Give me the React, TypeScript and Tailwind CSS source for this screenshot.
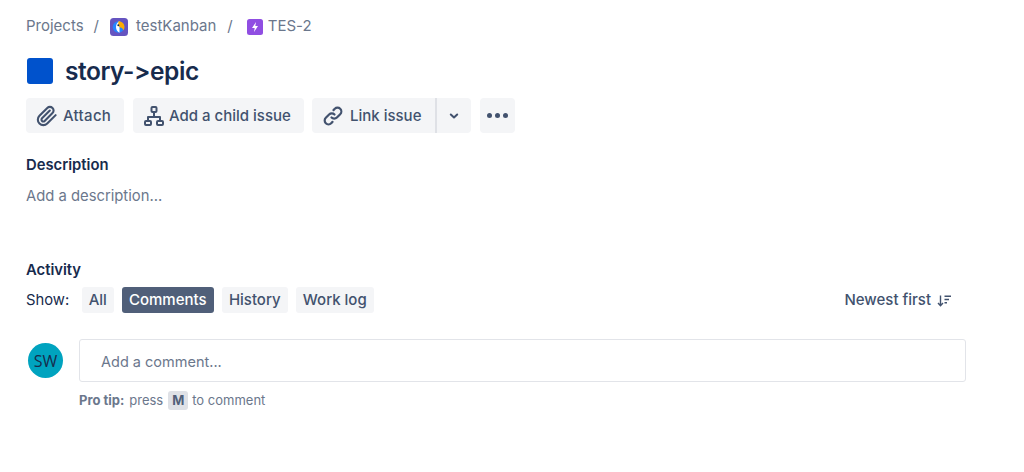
import React from 'react';

const ParrotIcon = () => (
  <svg width="18" height="18" viewBox="0 0 18 18">
    <rect width="18" height="18" rx="3.500" fill="#6554C0" />
    <circle cx="8.500" cy="9" r="5.800" fill="#2684FF" />
    <path d="M6 9c0-2.600 1.300-4.800 3.500-5.700V14.700C7.300 13.800 6 11.600 6 9z" fill="#fff" />
    <path d="M8.500 3.200c3.500 0 6 2.600 6 5.800 0 1.300-.4 2.500-1 3.400-.5-1.700-1.600-2.700-3-2.900C8.700 9.200 8 6 8.500 3.200z" fill="#FFAB00" />
    <circle cx="8.300" cy="7.300" r="1" fill="#172B4D" />
  </svg>
);

const StoryIcon = () => (
  <svg width="16" height="16" viewBox="0 0 16 16">
    <rect width="16" height="16" rx="2.500" fill="#904EE2" />
    <path d="M9 3 5 9h2.700L7 13l4-6H8.300z" fill="#fff" />
  </svg>
);

const AttachIcon = () => (
  <svg className="ml-px" width="22" height="22" viewBox="0 0 24 24" fill="none" stroke="#42526E" strokeWidth="2.300" strokeLinecap="round" strokeLinejoin="round">
    <path d="m21.440 11.050-9.190 9.190a6 6 0 0 1-8.490-8.490l8.570-8.570A4 4 0 1 1 18 8.840l-8.590 8.570a2 2 0 0 1-2.830-2.830l8.490-8.480" />
  </svg>
);

const TreeIcon = () => (
  <svg width="24" height="24" viewBox="0 0 24 24" fill="none" stroke="#42526E" strokeWidth="2" strokeLinejoin="round">
    <rect x="9.500" y="3" width="5" height="5" rx="1" />
    <rect x="3" y="17" width="6" height="4" rx="1" />
    <rect x="15" y="17" width="6" height="4" rx="1" />
    <path d="M12 8v5M6 17v-4h12v4" />
  </svg>
);

const LinkIcon = () => (
  <svg width="24" height="24" viewBox="0 0 24 24" fill="none" stroke="#42526E" strokeWidth="2.200" strokeLinecap="round">
    <path d="M10.500 13.500a3.800 3.800 0 0 0 5.400 0l3.300-3.300a3.800 3.800 0 0 0-5.400-5.400l-1.300 1.300" />
    <path d="M13.500 10.500a3.800 3.800 0 0 0-5.400 0l-3.300 3.300a3.800 3.800 0 0 0 5.400 5.400l1.300-1.300" />
  </svg>
);

const SortIcon = () => (
  <svg width="16" height="16" viewBox="0 0 16 16" fill="none" stroke="#42526E" strokeWidth="1.400">
    <path d="M4.500 2.500v10M2 10l2.500 2.700L7 10" />
    <path d="M8.500 3.200h6.500M8.500 6.500h4.500M8.500 9.800h2.500" />
  </svg>
);

const ActionButton = ({ icon, label, className }: { icon: React.ReactNode; label: string; className: string }) => (
  <button className={`flex h-[35px] items-center rounded-[4px] bg-[#F4F5F7] pl-[9px] text-[15px] font-medium text-[#42526E] ${className}`}>
    {icon}
    <span className="pt-px">{label}</span>
  </button>
);

const FilterButton = ({ label, active, className }: { label: string; active?: boolean; className: string }) => (
  <button
    className={`h-[26px] rounded-[3px] pr-px pt-px text-[15px] font-medium ${active ? 'bg-[#505F79] text-white' : 'bg-[#F4F5F7] text-[#42526E]'} ${className}`}
  >
    {label}
  </button>
);

const App = () => {
  return (
    <div className="h-[472px] w-[1024px] overflow-hidden bg-white pl-[26px] pr-[58px] pt-[16px] font-['Inter',sans-serif] text-[#172B4D] [font-feature-settings:'calt'_0]">
      {/* Breadcrumbs */}
      <div className="flex h-[20px] items-center pt-px text-[15px] text-[#6B778C]">
        <span>Projects</span>
        <span className="ml-[10px]">/</span>
        <span className="ml-[11px]"><ParrotIcon /></span>
        <span className="ml-[8px]">testKanban</span>
        <span className="ml-[11px]">/</span>
        <span className="ml-[14px]"><StoryIcon /></span>
        <span className="ml-[5px]">TES-2</span>
      </div>

      {/* Title */}
      <div className="mt-[22px] flex h-[26px] items-center">
        <div className="ml-px h-[26px] w-[26px] rounded-[3px] bg-[#0052CC]" />
        <h1 className="ml-[12px] text-[24.500px] font-semibold leading-none tracking-[-0.45px]">story-&gt;epic</h1>
      </div>

      {/* Actions */}
      <div className="mt-[14px] flex items-center">
        <ActionButton icon={<AttachIcon />} label="Attach" className="w-[98px] gap-[5px] tracking-[0.3px]" />
        <div className="ml-[9px]"><ActionButton icon={<TreeIcon />} label="Add a child issue" className="w-[171px] gap-[3px]" /></div>
        <div className="ml-[8px]"><ActionButton icon={<LinkIcon />} label="Link issue" className="w-[123px] gap-[5px] rounded-r-none" /></div>
        <button className="flex h-[35px] w-[36px] items-center justify-center rounded-r-[4px] border-l-2 border-[#DFE1E6] bg-[#F4F5F7]">
          <svg width="12" height="12" viewBox="0 0 12 12" fill="none" stroke="#42526E" strokeWidth="2" strokeLinecap="round" strokeLinejoin="round">
            <path d="M2.800 4.500 6 7.500l3.200-3" />
          </svg>
        </button>
        <button className="ml-[9px] flex h-[35px] w-[35px] items-center justify-center gap-[3px] rounded-[4px] bg-[#F4F5F7]">
          <span className="h-[5px] w-[5px] rounded-full bg-[#42526E]" />
          <span className="h-[5px] w-[5px] rounded-full bg-[#42526E]" />
          <span className="h-[5px] w-[5px] rounded-full bg-[#42526E]" />
        </button>
      </div>

      {/* Description */}
      <h2 className="mt-[23px] text-[14.800px] font-semibold leading-[18px]">Description</h2>
      <p className="mt-[13px] text-[14.800px] leading-[18px] text-[#6B778C]">Add a description...</p>

      {/* Activity */}
      <h2 className="mt-[56px] text-[14.800px] font-semibold leading-[18px]">Activity</h2>
      <div className="mt-[8px] flex items-center justify-between pr-[14px]">
        <div className="flex items-center gap-[8px]">
          <span className="mr-[5px] text-[14.800px]">Show:</span>
          <FilterButton label="All" className="w-[32px]" />
          <FilterButton label="Comments" active className="w-[92px]" />
          <FilterButton label="History" className="w-[66px]" />
          <FilterButton label="Work log" className="w-[78px]" />
        </div>
        <div className="flex items-center gap-[5px] pt-px text-[15px] font-medium text-[#42526E]">
          Newest first
          <SortIcon />
        </div>
      </div>

      {/* Comment box */}
      <div className="mt-[26px] flex items-center">
        <div className="ml-[2px] flex h-[35px] w-[35px] items-center justify-center rounded-full bg-[#00A3BF] font-['Open_Sans',sans-serif] text-[16px] text-[#172B4D]">
          SW
        </div>
        <div className="ml-[16px] flex h-[43px] w-[887px] items-center rounded-[3px] border-[1.500px] border-[#E2E4E9] pl-[21px] pt-[2px] text-[14.500px] text-[#6B778C]">
          Add a comment...
        </div>
      </div>
      <div className="ml-[53px] mt-[9px] flex items-center text-[13px] text-[#6B778C]">
        <span className="font-bold">Pro tip:</span>
        <span className="ml-[5px]">press</span>
        <span className="ml-[5px] flex h-[19px] w-[20px] items-center justify-center rounded-[3px] bg-[#DFE1E6] font-bold text-[#505F79]">M</span>
        <span className="ml-[4px]">to comment</span>
      </div>
    </div>
  );
};

export default App;
